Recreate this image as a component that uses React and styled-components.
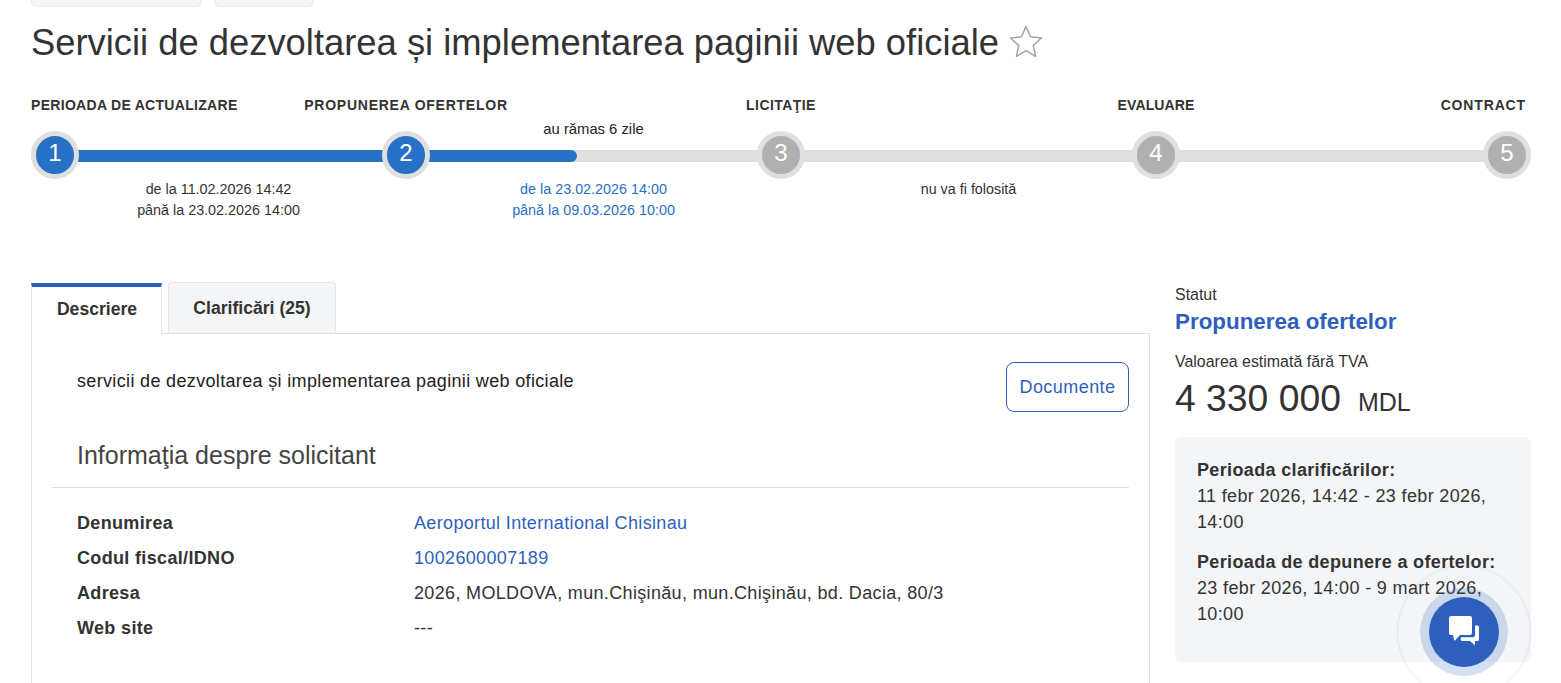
import React from 'react';
import styled, { createGlobalStyle } from 'styled-components';

const GlobalStyle = createGlobalStyle`
	html, body {
		margin: 0;
		padding: 0;
		height: 683px;
		overflow: hidden;
		background: #fff;
		font-family: "Liberation Sans", Arial, sans-serif;
		color: #333;
	}
`;

const Page = styled.div`
	box-sizing: border-box;
	width: 1561px;
	padding: 0 30px 0 31px;
`;

const TopButtons = styled.div`
	display: flex;
	gap: 12px;
	height: 7px;
`;

const TopButton = styled.div`
	box-sizing: border-box;
	width: ${p => p.$width}px;
	height: 7px;
	background: #f4f5f7;
	border: 1px solid #e9eaec;
	border-top: 0;
	border-radius: 0 0 6px 6px;
`;

const TitleRow = styled.div`
	display: flex;
	align-items: center;
	gap: 9px;
	height: 48px;
	margin-top: 12px;

	svg {
		margin-top: -2px;
	}
`;

const Title = styled.h1`
	margin: 0;
	font-weight: 400;
	font-size: 36.37px;
	line-height: 48px;
	color: #333;
`;

const Stepper = styled.div`
	margin-top: 28px;
`;

// circles sit on the column edges, the outer two spans are shorter
const Stops = styled.div`
	display: grid;
	grid-template-columns: 48px 303px 48px 327px 48px 327px 48px 303px 48px;
`;

const LabelCell = styled.div`
	grid-column: ${p => p.$index * 2 + 1};
	display: flex;
	justify-content: ${p => p.$align || 'center'};
	box-sizing: border-box;
	padding-right: ${p => p.$inset || 0}px;
	font-weight: 700;
	font-size: 14px;
	letter-spacing: ${p => p.$spacing || 0}px;
	line-height: 20px;
	white-space: nowrap;
	color: #333;
`;

const Columns = styled.div`
	display: grid;
	grid-template-columns: repeat(4, 1fr);
	text-align: center;
`;

const Remaining = styled.div`
	grid-column: 2;
	box-sizing: border-box;
	height: 16px;
	padding-top: 6px;
	font-size: 14.8px;
	line-height: 16px;
	color: #222;
`;

const Track = styled(Stops)`
	position: relative;
	height: 48px;
`;

const TrackBar = styled.div`
	position: absolute;
	left: 24px;
	right: 24px;
	top: 19px;
	height: 12px;
	background: #dfdfdf;
`;

const TrackFill = styled.div`
	height: 12px;
	background: #2671c5;
	border-radius: 0 6px 6px 0;
`;

const StepCircle = styled.div`
	position: relative;
	grid-column: ${p => p.$index * 2 + 1};
	box-sizing: border-box;
	width: 48px;
	height: 48px;
	border-radius: 50%;
	border: 5px solid #dfdfdf;
	background: ${p => (p.$done ? '#2671c5' : '#b0b0b0')};
	color: #fff;
	font-size: 24px;
	line-height: 33px;
	text-align: center;
`;

const DateRow = styled(Columns)`
	height: 103px;
`;

const DateCell = styled.div`
	font-size: 14.35px;
	line-height: 21px;
	color: ${p => (p.$active ? '#2671c5' : '#333')};
`;

const Main = styled.div`
	display: flex;
	gap: 25px;
`;

const LeftColumn = styled.div`
	width: 1119px;
	flex: none;
`;

const Tabs = styled.div`
	display: flex;
	gap: 6px;
	height: 52px;
	box-sizing: border-box;
	border-bottom: 1px solid #e0e0e0;
`;

const Tab = styled.div`
	box-sizing: border-box;
	width: ${p => p.$width}px;
	height: 51px;
	display: flex;
	align-items: center;
	justify-content: center;
	font-weight: 700;
	font-size: 17.6px;
	color: #333;
	border: 1px solid #e3e4e6;
	border-bottom: 0;
	border-top: ${p => (p.$active ? '4px solid #2f5fbd' : '1px solid #e3e4e6')};
	border-radius: ${p => (p.$active ? '0' : '4px 4px 0 0')};
	background: ${p => (p.$active ? '#fff' : '#f4f5f7')};
	margin-top: ${p => (p.$active ? 1 : 0)}px;
	padding: ${p => (p.$active ? '0 0 2px 1px' : '1px 0 0 0')};
`;

const Panel = styled.div`
	box-sizing: border-box;
	height: 350px;
	padding: 28px 20px 0 20px;
	border-left: 1px solid #e0e0e0;
	border-right: 1px solid #e0e0e0;
	font-size: 18px;
	letter-spacing: 0.34px;
`;

const IntroRow = styled.div`
	display: flex;
	justify-content: space-between;
	align-items: flex-start;
	padding-left: 25px;
`;

const Intro = styled.div`
	line-height: 38px;
	color: #222;
`;

const OutlineButton = styled.div`
	box-sizing: border-box;
	width: 123px;
	height: 50px;
	display: flex;
	align-items: center;
	justify-content: center;
	border: 1px solid #2f5fbd;
	border-radius: 8px;
	color: #2f5fbd;
	letter-spacing: 0.45px;
`;

const SectionTitle = styled.div`
	margin-top: 29px;
	padding: 0 0 18px 25px;
	border-bottom: 1px solid #e0e0e0;
	font-size: 25px;
	letter-spacing: 0;
	line-height: 28px;
	color: #444;
`;

const InfoGrid = styled.div`
	display: grid;
	grid-template-columns: 337px 1fr;
	grid-auto-rows: 35px;
	margin-top: 18px;
	padding-left: 25px;
	align-items: center;
`;

const InfoKey = styled.div`
	font-weight: 700;
	color: #333;
`;

const InfoValue = styled.div`
	color: ${p => (p.$link ? '#2f5fbd' : '#333')};
`;

const Sidebar = styled.div`
	width: 356px;
	flex: none;
`;

const SmallLabel = styled.div`
	font-size: 15.95px;
	line-height: 20px;
	color: #333;
	margin-top: ${p => p.$top || 0}px;
`;

const StatusText = styled.div`
	margin-top: 3px;
	font-weight: 700;
	font-size: 22.4px;
	line-height: 28px;
	color: #2f5fbd;
`;

const Amount = styled.div`
	display: flex;
	align-items: baseline;
	gap: 17px;
	margin-top: 4px;
	font-size: 37.3px;
	line-height: 44px;
	color: #333;
`;

const Currency = styled.span`
	font-size: 25px;
`;

const InfoBox = styled.div`
	box-sizing: border-box;
	height: 225px;
	margin-top: 13px;
	padding: 20px 22px;
	background: #f4f5f7;
	border-radius: 6px;
	font-size: 18px;
	letter-spacing: 0.35px;
	line-height: 26px;
	color: #333;
`;

const BoxTitle = styled.div`
	font-weight: 700;
	margin-top: ${p => p.$top || 0}px;
`;

const ChatWidget = styled.div`
	position: fixed;
	left: 1397px;
	top: 565px;
	box-sizing: border-box;
	width: 134px;
	height: 134px;
	display: flex;
	align-items: center;
	justify-content: center;
	border: 1.5px solid rgba(47, 95, 189, 0.12);
	border-radius: 50%;
`;

const ChatHalo = styled.div`
	box-sizing: border-box;
	width: 88px;
	height: 88px;
	display: flex;
	align-items: center;
	justify-content: center;
	border-radius: 50%;
	background: rgba(47, 95, 189, 0.2);
`;

const ChatButton = styled.div`
	width: 70px;
	height: 70px;
	display: flex;
	align-items: center;
	justify-content: center;
	border-radius: 50%;
	background: #2f5fbd;

	svg {
		margin-top: -2px;
	}
`;

const StarIcon = () => (
	<svg width="36" height="36" viewBox="0 0 34 34" fill="none">
		<path
			d="M17 2.500l4.300 9.600 10.400 1.100-7.800 7 2.200 10.300-9.100-5.300-9.100 5.300 2.200-10.300-7.800-7 10.400-1.100z"
			stroke="#a3a3a3"
			strokeWidth="1.400"
			strokeLinejoin="round"
		/>
	</svg>
);

const ChatIcon = () => (
	<svg width="30" height="30" viewBox="0 0 30 30" fill="#fff">
		<path d="M2 0h19a2 2 0 0 1 2 2v15a2 2 0 0 1-2 2H11l-5.500 6L4 19H2a2 2 0 0 1-2-2V2a2 2 0 0 1 2-2z" />
		<path d="M26 9.500h2.500a1.500 1.500 0 0 1 1.500 1.500v12.500a1.500 1.500 0 0 1-1.500 1.500H26v4.500L21 25h-7.800a1.500 1.500 0 0 1-1.500-1.500v-2.200H24a2 2 0 0 0 2-2z" />
	</svg>
);

const stages = [
	{ label: 'PERIOADA DE ACTUALIZARE', align: 'flex-start', spacing: 0.3 },
	{ label: 'PROPUNEREA OFERTELOR', spacing: 0.75 },
	{ label: 'LICITAŢIE', spacing: 0.44 },
	{ label: 'EVALUARE', spacing: 0.1 },
	{ label: 'CONTRACT', align: 'flex-end', inset: 5, spacing: 0.85 },
];

const info = [
	{ key: 'Denumirea', value: 'Aeroportul International Chisinau', link: true },
	{ key: 'Codul fiscal/IDNO', value: '1002600007189', link: true },
	{ key: 'Adresa', value: '2026, MOLDOVA, mun.Chişinău, mun.Chişinău, bd. Dacia, 80/3' },
	{ key: 'Web site', value: '---' },
];

export default function App() {
	return (
		<Page>
			<GlobalStyle />
			<TopButtons>
				<TopButton $width={171} />
				<TopButton $width={100} />
			</TopButtons>
			<TitleRow>
				<Title>Servicii de dezvoltarea și implementarea paginii web oficiale</Title>
				<StarIcon />
			</TitleRow>

			<Stepper>
				<Stops>
					{stages.map((s, i) => (
						<LabelCell key={s.label} $index={i} $align={s.align} $inset={s.inset} $spacing={s.spacing}>
							{s.label}
						</LabelCell>
					))}
				</Stops>
				<Columns>
					<Remaining>au rămas 6 zile</Remaining>
				</Columns>
				<Track>
					<TrackBar>
						<TrackFill style={{ width: `${(522 / 1452) * 100}%` }} />
					</TrackBar>
					{stages.map((s, i) => (
						<StepCircle key={s.label} $index={i} $done={i < 2}>{i + 1}</StepCircle>
					))}
				</Track>
				<DateRow>
					<DateCell>de la 11.02.2026 14:42<br />până la 23.02.2026 14:00</DateCell>
					<DateCell $active>de la 23.02.2026 14:00<br />până la 09.03.2026 10:00</DateCell>
					<DateCell>nu va fi folosită</DateCell>
				</DateRow>
			</Stepper>

			<Main>
				<LeftColumn>
					<Tabs>
						<Tab $active $width={131}>Descriere</Tab>
						<Tab $width={168}>Clarificări (25)</Tab>
					</Tabs>
					<Panel>
						<IntroRow>
							<Intro>servicii de dezvoltarea și implementarea paginii web oficiale</Intro>
							<OutlineButton>Documente</OutlineButton>
						</IntroRow>
						<SectionTitle>Informaţia despre solicitant</SectionTitle>
						<InfoGrid>
							{info.map(row => (
								<React.Fragment key={row.key}>
									<InfoKey>{row.key}</InfoKey>
									<InfoValue $link={row.link}>{row.value}</InfoValue>
								</React.Fragment>
							))}
						</InfoGrid>
					</Panel>
				</LeftColumn>
				<Sidebar>
					<SmallLabel $top={3}>Statut</SmallLabel>
					<StatusText>Propunerea ofertelor</StatusText>
					<SmallLabel $top={16}>Valoarea estimată fără TVA</SmallLabel>
					<Amount>4 330 000 <Currency>MDL</Currency></Amount>
					<InfoBox>
						<BoxTitle>Perioada clarificărilor:</BoxTitle>
						11 febr 2026, 14:42 - 23 febr 2026, 14:00
						<BoxTitle $top={14}>Perioada de depunere a ofertelor:</BoxTitle>
						23 febr 2026, 14:00 - 9 mart 2026, 10:00
					</InfoBox>
				</Sidebar>
			</Main>

			<ChatWidget>
				<ChatHalo>
					<ChatButton>
						<ChatIcon />
					</ChatButton>
				</ChatHalo>
			</ChatWidget>
		</Page>
	);
}
